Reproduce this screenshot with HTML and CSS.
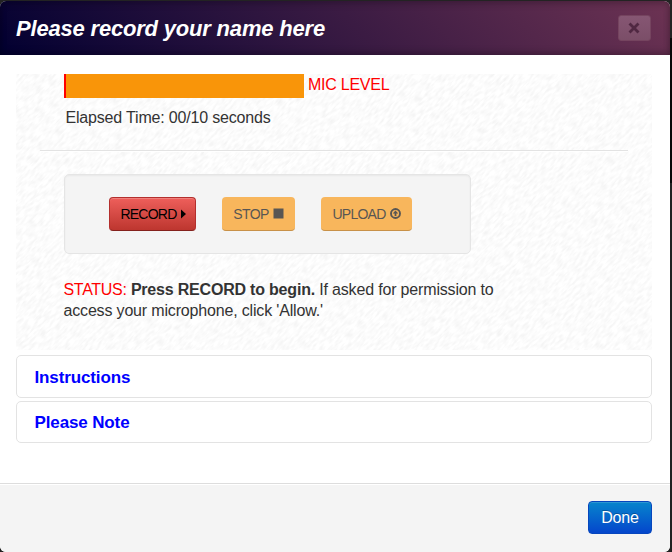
FILE: index.html
```
<!DOCTYPE html>
<html lang="en">
<head>
<meta charset="utf-8">
<title>Please record your name here</title>
<link rel="stylesheet" href="styles.css">
</head>
<body>
<div class="modal">
  <header class="modal-header">
    <h1>Please record your name here</h1>
    <button class="close" aria-label="Close">
      <svg width="12" height="12" viewBox="0 0 12 12"><path d="M2.500 2.500 9.500 9.500M9.500 2.500 2.500 9.500"/></svg>
    </button>
  </header>
  <main class="modal-body">
    <section class="recorder">
      <svg class="paper" width="636" height="276" aria-hidden="true">
        <filter id="grain" x="0" y="0" width="100%" height="100%" color-interpolation-filters="sRGB">
          <feTurbulence type="fractalNoise" baseFrequency="0.13 0.42" numOctaves="2" seed="4"/>
          <feColorMatrix values="0.1 0 0 0 0.937  0.1 0 0 0 0.937  0.1 0 0 0 0.937  0 0 0 0 1"/>
        </filter>
        <g transform="rotate(-45 318 138)"><rect x="-60" y="-240" width="760" height="760" filter="url(#grain)"/></g>
      </svg>
      <div class="content">
        <div class="level"><div class="meter"></div><span class="red mic">MIC LEVEL</span></div>
        <p class="elapsed">Elapsed Time: 00/10 seconds</p>
        <hr>
        <div class="well">
          <button class="btn record"><span>RECORD</span><svg width="5" height="10" viewBox="0 0 5 10"><path d="M0 .5 5 5 0 9.500z"/></svg></button>
          <button class="btn stop" disabled><span>STOP</span><svg width="11" height="11" viewBox="0 0 11 11"><path d="M.5 .5h10v10H.5z"/></svg></button>
          <button class="btn upload" disabled><span>UPLOAD</span><svg width="11" height="11" viewBox="0 0 11 11"><circle cx="5.500" cy="5.500" r="4.500" fill="none" stroke="currentColor" stroke-width="1.900"/><path d="M5.500 2.500 8.300 5.500H6.400V8H4.600V5.500H2.700z"/></svg></button>
        </div>
        <p class="status"><span class="red">STATUS:</span> <b>Press RECORD to begin.</b> If asked for permission to<br>access your microphone, click 'Allow.'</p>
      </div>
    </section>
    <div class="panel">Instructions</div>
    <div class="panel note">Please Note</div>
  </main>
  <footer class="modal-footer"><button class="done">Done</button></footer>
</div>
</body>
</html>
```
FILE: styles.css
```
* { box-sizing: border-box; }
body {
  margin: 0;
  height: 552px;
  overflow: hidden;
  padding-top: 1px;
  background: linear-gradient(#232323 38px, #080808 38px, #080808 183px, #222 183px);
  font: 16px/21px "Liberation Sans", Arial, sans-serif;
  color: #333;
}
button { font-family: inherit; margin: 0; }
h1, p { margin: 0; }
.modal {
  width: 670px;
  height: 551px;
  display: flex;
  flex-direction: column;
  border-radius: 6px;
  overflow: hidden;
  background: #fff;
}
.modal-header {
  height: 54px;
  display: flex;
  justify-content: space-between;
  align-items: center;
  padding: 0 19px 0 16px;
  background: linear-gradient(45deg, #020031, #6d3353);
  box-shadow: inset 0 3px 7px rgba(0, 0, 0, .2), inset 0 -3px 7px rgba(0, 0, 0, .2);
}
h1 {
  color: #fff;
  font-size: 22px;
  line-height: 30px;
  padding-top: 1px;
  font-style: italic;
  font-weight: bold;
  letter-spacing: -.19px;
}
.close {
  width: 33px;
  height: 26px;
  padding: 0 1px 1px 0;
  display: flex;
  align-items: center;
  justify-content: center;
  border: 1px solid #75445f;
  border-radius: 3px;
  background: linear-gradient(#865673, #7b4e68);
}
.close path { stroke: #502842; stroke-width: 2.8; stroke-linecap: square; }
.modal-body { height: 428px; padding: 19px 18px 0 16px; }
.recorder {
  position: relative;
  height: 276px;
  overflow: hidden;
  background: #fbfbfb;
}
.paper { position: absolute; inset: 0; }
.content { position: relative; padding: 0 24px; }
.level { display: flex; height: 24px; margin-left: 24px; }
.meter {
  width: 240px;
  background: #f99509;
  border-left: 2px solid #f00;
}
.red { color: #f00; }
.mic { margin-left: 4px; letter-spacing: -.25px; }
.elapsed { margin: 9px 0 22px 25.500px; letter-spacing: -.18px; }
hr {
  margin: 0;
  border: 0;
  border-top: 1px solid #e3e3e3;
  border-bottom: 1px solid #fff;
}
.well {
  width: 407px;
  height: 80px;
  margin: 22px 0 25px 24px;
  padding: 22px 44px 0;
  display: flex;
  gap: 26px;
  background: #f4f4f4;
  border: 1px solid #e5e5e5;
  border-radius: 5px;
  box-shadow: inset 0 1px 2px rgba(0, 0, 0, .05);
}
.btn {
  height: 34px;
  padding: 0;
  display: flex;
  align-items: center;
  justify-content: center;
  gap: 4px;
  border: 0;
  border-radius: 4px;
  font-size: 14px;
  letter-spacing: -.75px;
}
.btn svg { fill: currentColor; flex: none; }
.record {
  width: 87px;
  padding-left: 1px;
  color: #000;
  border: 1px solid #b32f2d;
  border-bottom-color: #84211c;
  background: linear-gradient(#ee5f5b, #bd362f);
  box-shadow: inset 0 1px 0 rgba(255, 255, 255, .2);
}
.stop, .upload {
  color: #595653;
  background: #f8b65c;
  border-bottom: 1px solid #c89148;
}
.stop { width: 73px; letter-spacing: -.6px; }
.upload { width: 91px; }
.status { margin-left: 23.500px; white-space: nowrap; letter-spacing: -.17px; }
.status .red { letter-spacing: -.3px; }
.status b { letter-spacing: -.2px; }
.panel {
  height: 43px;
  margin-top: 5px;
  padding: 1px 17.500px 0;
  display: flex;
  align-items: center;
  border: 1px solid #e3e3e3;
  border-radius: 5px;
  color: #00f;
  font-size: 17px;
  font-weight: bold;
  letter-spacing: -.13px;
}
.note { margin-top: 3px; height: 42px; padding-top: 0; }
.modal-footer {
  flex: 1;
  display: flex;
  justify-content: flex-end;
  padding: 17px 18px 0 0;
  background: #f4f4f4;
  border-top: 1px solid #ddd;
  box-shadow: inset 0 1px 0 #fff;
}
.done {
  width: 64px;
  height: 33px;
  padding: 0;
  border: 1px solid #0646bd;
  border-radius: 4px;
  color: #fff;
  font-size: 16px;
  letter-spacing: -.2px;
  background: linear-gradient(#0785cc, #0446cc);
  box-shadow: inset 0 1px 0 rgba(255, 255, 255, .15);
  text-shadow: 0 -1px 0 rgba(0, 0, 0, .25);
}
```
